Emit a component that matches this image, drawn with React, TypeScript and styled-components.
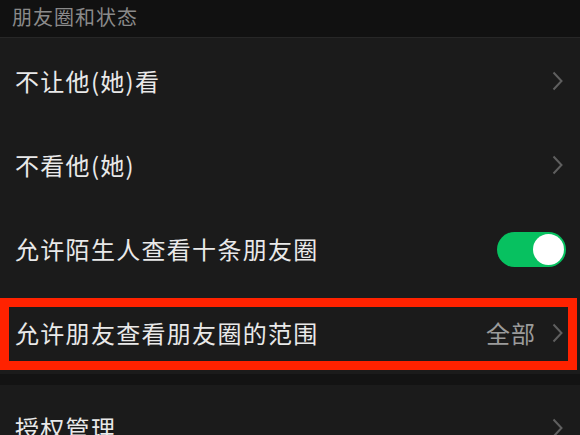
import styled, { createGlobalStyle } from "styled-components";

const GlobalStyle = createGlobalStyle`
  html, body {
    margin: 0;
    padding: 0;
    background: #1b1b1b;
    overflow: hidden;
  }
  body {
    font-family: "Noto Sans CJK SC", "Noto Sans", sans-serif;
  }
`;

type Item =
  | { id: string; label: string; kind: "link"; value?: string; marked?: boolean }
  | { id: string; label: string; kind: "switch"; on: boolean };

const items: Item[] = [
  { id: "block", label: "不让他(她)看", kind: "link" },
  { id: "hide", label: "不看他(她)", kind: "link" },
  { id: "stranger", label: "允许陌生人查看十条朋友圈", kind: "switch", on: true },
  { id: "range", label: "允许朋友查看朋友圈的范围", kind: "link", value: "全部", marked: true },
];

const Chevron = () => (
  <ChevronIcon width="11" height="20" viewBox="0 0 11 20">
    <polyline points="1.5,1.5 9.5,10 1.5,18.5" fill="none" stroke="#5f5f5f" strokeWidth="2" />
  </ChevronIcon>
);

const App = () => {
  return (
    <Page>
      <GlobalStyle />
      <SectionTitle>朋友圈和状态</SectionTitle>
      <Group>
        {items.map((item) => (
          <Row key={item.id}>
            <Label>{item.label}</Label>
            {item.kind === "switch" ? (
              <Toggle on={item.on}>
                <Knob />
              </Toggle>
            ) : (
              <Trail>
                {item.value && <Value>{item.value}</Value>}
                <Chevron />
              </Trail>
            )}
            {item.kind === "link" && item.marked && <Marker />}
          </Row>
        ))}
      </Group>
      <Spacer />
      <Group>
        <Row>
          <Label>授权管理</Label>
          <Trail>
            <Chevron />
          </Trail>
        </Row>
      </Group>
    </Page>
  );
};

const Page = styled.div`
  width: 580px;
  display: flex;
  flex-direction: column;
  background: #1b1b1b;
`;

const SectionTitle = styled.div`
  height: 38px;
  box-sizing: border-box;
  padding: 0 0 3px 12px;
  display: flex;
  align-items: center;
  background: #111111;
  border-bottom: 1px solid #272727;
  color: #8a8a8a;
  font-size: 20px;
  letter-spacing: 1px;
  line-height: 1;
`;

const Group = styled.div`
  display: flex;
  flex-direction: column;
  background: #1b1b1b;
`;

const Row = styled.div`
  position: relative;
  height: 84px;
  padding: 2px 14px 0 15px;
  box-sizing: border-box;
  display: flex;
  align-items: center;
  justify-content: space-between;
`;

const Label = styled.span`
  color: #e9e9e9;
  font-size: 24px;
  letter-spacing: 1.3px;
  line-height: 1;
`;

const Trail = styled.div`
  display: flex;
  align-items: center;
  gap: 16px;
  padding-right: 3px;
`;

const Value = styled.span`
  color: #9b9b9b;
  font-size: 24px;
  letter-spacing: 1px;
  line-height: 1;
`;

const ChevronIcon = styled.svg`
  display: block;
`;

const Toggle = styled.div<{ on: boolean }>`
  width: 69px;
  height: 35px;
  border-radius: 18px;
  background: ${({ on }) => (on ? "#07c160" : "#3a3a3a")};
  display: flex;
  align-items: center;
  justify-content: ${({ on }) => (on ? "flex-end" : "flex-start")};
  padding: 0 2px;
  box-sizing: border-box;
`;

const Knob = styled.div`
  width: 31px;
  height: 31px;
  border-radius: 50%;
  background: #ffffff;
`;

const Marker = styled.div`
  position: absolute;
  top: 8px;
  left: 0;
  right: 3px;
  bottom: 4px;
  border: 9px solid #ff2200;
  pointer-events: none;
`;

const Spacer = styled.div`
  height: 11px;
  background: #131313;
`;

export default App;
